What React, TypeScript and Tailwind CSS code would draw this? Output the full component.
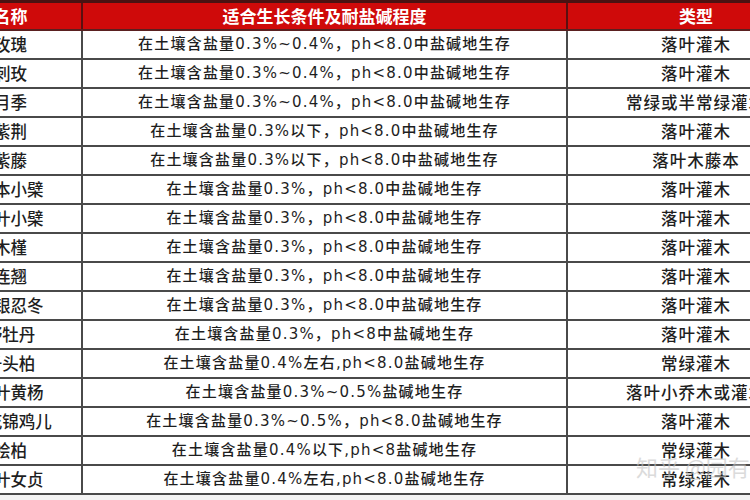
import React from "react";

type Row = { name: string; cond: string; kind: string };

const rows: Row[] = [
  { name: "玫瑰", cond: "在土壤含盐量0.3%~0.4%，ph<8.0中盐碱地生存", kind: "落叶灌木" },
  { name: "刺玫", cond: "在土壤含盐量0.3%~0.4%，ph<8.0中盐碱地生存", kind: "落叶灌木" },
  { name: "月季", cond: "在土壤含盐量0.3%~0.4%，ph<8.0中盐碱地生存", kind: "常绿或半常绿灌木" },
  { name: "紫荆", cond: "在土壤含盐量0.3%以下，ph<8.0中盐碱地生存", kind: "落叶灌木" },
  { name: "紫藤", cond: "在土壤含盐量0.3%以下，ph<8.0中盐碱地生存", kind: "落叶木藤本" },
  { name: "日本小檗", cond: "在土壤含盐量0.3%，ph<8.0中盐碱地生存", kind: "落叶灌木" },
  { name: "紫叶小檗", cond: "在土壤含盐量0.3%，ph<8.0中盐碱地生存", kind: "落叶灌木" },
  { name: "木槿", cond: "在土壤含盐量0.3%，ph<8.0中盐碱地生存", kind: "落叶灌木" },
  { name: "连翘", cond: "在土壤含盐量0.3%，ph<8.0中盐碱地生存", kind: "落叶灌木" },
  { name: "金银忍冬", cond: "在土壤含盐量0.3%，ph<8.0中盐碱地生存", kind: "落叶灌木" },
  { name: "野牡丹", cond: "在土壤含盐量0.3%，ph<8中盐碱地生存", kind: "落叶灌木" },
  { name: "千头柏", cond: "在土壤含盐量0.4%左右,ph<8.0盐碱地生存", kind: "常绿灌木" },
  { name: "金叶黄杨", cond: "在土壤含盐量0.3%~0.5%盐碱地生存", kind: "落叶小乔木或灌木" },
  { name: "红花锦鸡儿", cond: "在土壤含盐量0.3%~0.5%，ph<8.0盐碱地生存", kind: "落叶灌木" },
  { name: "桧柏", cond: "在土壤含盐量0.4%以下,ph<8盐碱地生存", kind: "常绿灌木" },
  { name: "金叶女贞", cond: "在土壤含盐量0.4%左右,ph<8.0盐碱地生存", kind: "常绿灌木" },
];

const cell =
  "flex items-center justify-center whitespace-nowrap overflow-hidden border-r-2 border-[#4a4a4a]";

const App = () => {
  return (
    <div
      className="relative w-[750px] h-[500px] overflow-hidden bg-[#f4f4f4] text-[#1e1e1e]"
      style={{ fontFamily: '"Noto Sans CJK SC", "Noto Sans", sans-serif' }}
    >
      <div className="ml-[-60px] w-[886px] bg-white">
        {/* header */}
        <div className="grid grid-cols-[143px_485px_258px] h-[31px] border-t-[3px] border-[#4a1212] bg-[#cf0a0a] text-white font-bold text-[17px] border-b-2 border-b-[#5a2020]">
          <div className={cell + " border-[#5a1010]"}>名称</div>
          <div className={cell + " border-[#5a1010]"}>适合生长条件及耐盐碱程度</div>
          <div className={cell + " border-[#5a1010]"}>类型</div>
        </div>
        {/* body */}
        {rows.map((r, i) => (
          <div
            key={i}
            className="grid grid-cols-[143px_485px_258px] h-[29px] border-b-2 border-[#4a4a4a]"
          >
            <div className={cell + " text-[16.5px] font-medium"}>{r.name}</div>
            <div
              className={cell + " text-[15px] font-medium tracking-[1.2px] font-['DejaVu_Sans','Noto_Sans_CJK_SC',sans-serif]"}
            >
              {r.cond}
            </div>
            <div className={cell + " text-[16.5px] font-medium tracking-[1px]"}>{r.kind}</div>
          </div>
        ))}
      </div>
      {/* watermark */}
      <div className="absolute left-[636px] top-[450px] text-[22px] text-[#c4c4c4] opacity-60 whitespace-nowrap pointer-events-none">
        知乎 @园有
      </div>
    </div>
  );
};

export default App;
